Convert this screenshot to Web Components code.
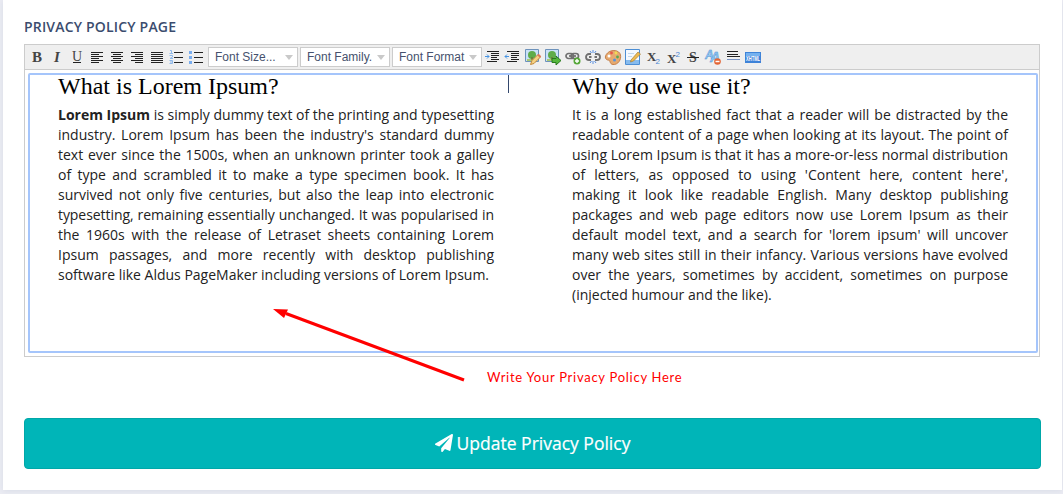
<!DOCTYPE html>
<html lang="en"><head><meta charset="utf-8"><title>Privacy Policy</title>
<style>html,body{margin:0;height:494px;overflow:hidden;background:#ebecf3}</style></head>
<body><policy-page></policy-page>
<script>
const def=(name,html)=>customElements.define(name,class extends HTMLElement{
  connectedCallback(){ if(this.shadowRoot)return; this.attachShadow({mode:'open'}).innerHTML=typeof html==='function'?html(this):html; }
});
const bars=(rows)=>rows.map(([y,a,b,c])=>`<path d="M${a} ${y+.5}H${b}" stroke="${c||'#222'}"/>`).join('');
const glyph=(t,x,y,s,extra='')=>`<text x="${x}" y="${y}" font-size="${s}" font-family="Liberation Serif,serif" fill="#444" ${extra}>${t}</text>`;
const photo=`<path d="M1.5 1.5h13v12h-13z" fill="#c9e1f8" stroke="#6d92bb"/><path d="M3 11h10v2H3z" fill="#a9c873"/><circle cx="8" cy="7" r="4" fill="#5fac4a"/><path d="M7.500 9h1v3h-1z" fill="#80572c"/>`;
const icons={
 bold:glyph('B',4,14,15,'font-weight="bold"'),
 italic:glyph('I',6,14,15,'font-weight="bold" font-style="italic"'),
 underline:glyph('U',4,12.5,14)+bars([[14,5,13]]),
 left:bars([[4,3,15],[6,3,11],[8,3,15],[10,3,11],[12,3,15],[14,3,11]]),
 center:bars([[4,3,15],[6,5,13],[8,3,15],[10,5,13],[12,3,15],[14,5,13]]),
 right:bars([[4,3,15],[6,7,15],[8,3,15],[10,7,15],[12,3,15],[14,7,15]]),
 justify:bars([[4,3,15],[6,3,15],[8,3,15],[10,3,15],[12,3,15],[14,3,15]]),
 ol:bars([[4,6,15],[9,6,15],[14,6,15]])+`<path d="M2 2.500h1.500v3M1.500 5.500H5M1.500 7.500h3v1.500l-2.500 1.500H5M1.500 12.500h3v3h-3M2 14h2.500" fill="none" stroke="#8fb9ea"/>`,
 ul:bars([[4,6,15],[9,6,15],[14,6,15]])+`<path d="M1 3h3v3H1zM1 8h3v3H1zM1 13h3v3H1z" fill="#78adf0"/>`,
 indent:bars([[3,3,15],[5,7,15],[7,7,15],[9,7,13],[11,7,15],[13,3,13]])+`<path d="M1 8.500h4M3 6.500l2 2-2 2" fill="none" stroke="#4593e3"/>`,
 outdent:bars([[3,3,15],[5,7,15],[7,7,15],[9,7,13],[11,7,15],[13,3,13]])+`<path d="M5 8.500H1M3 6.500l-2 2 2 2" fill="none" stroke="#4593e3"/>`,
 image:photo+`<path d="m8 12.500 6-6 2.500 2.500-6.500 6.500-3.500 1z" fill="#f6d183" stroke="#c18a3b"/><path d="m14 6.500 2.500 2.500" stroke="#dd765c" stroke-width="2"/>`,
 upload:photo+`<path d="M8 10.500h4V8l5 4.500-5 4.500v-2.500H8z" fill="#55b73c" stroke="#29791f"/>`,
 link:`<g fill="none" stroke="#707070" stroke-width="1.700"><rect x="2" y="5.500" width="7.500" height="5" rx="2.500"/><rect x="7" y="5.500" width="7.500" height="5" rx="2.500"/><path d="M5 8h7"/></g><circle cx="13" cy="13" r="3.500" fill="#55a738"/><path d="M11 13h4m-2-2v4" stroke="#fff" stroke-width="1.400"/>`,
 unlink:`<g fill="none" stroke="#707070" stroke-width="1.800"><path d="M7 6H5a3 3 0 0 0 0 6h2M11 6h2a3 3 0 0 1 0 6h-2M5 9h2.500m3 0H13"/></g><path d="m6 3 1.500 2M9 2v3m3-2-1.500 2M6 15l1.500-2M9 16v-3m3 2-1.500-2" stroke="#5a91e2"/>`,
 color:`<path d="M16.500 7c-1-5-9-6-13-2C-.5 9 2 12 4 12c3 0 1 4 5 4.500 5 .5 8.500-5 7.500-9.500z" fill="#e6aa70" stroke="#c5814b"/><circle cx="5" cy="8" r="1.500" fill="#fff"/><circle cx="7.500" cy="5" r="1.400" fill="#e7564c"/><circle cx="12" cy="5" r="1.400" fill="#f2db53"/><circle cx="13.500" cy="9" r="1.400" fill="#5aa950"/><circle cx="10.500" cy="12" r="1.500" fill="#5592dc"/>`,
 form:`<path d="M1.500 1.500h14v15h-14z" fill="#f4f9ff" stroke="#4c8ed4"/><path d="M2 12h13v4H2z" fill="#86bbee"/><path d="M4 5.500h6M4 8.500h4" stroke="#c0d7ee"/><path d="m7 12 7-8 2.500 2-7 7-3 1z" fill="#eebc51" stroke="#a57b37" stroke-width=".7"/>`,
 sub:glyph('X',3,13,13,'font-weight="bold"')+glyph('2',11.5,16,8,'style="fill:#4d86d4;font-family:Liberation Sans"'),
 sup:glyph('X',3,15,13,'font-weight="bold"')+glyph('2',11.5,9,8,'style="fill:#4d86d4;font-family:Liberation Sans"'),
 strike:glyph('S',5,14,14,'font-weight="bold"')+bars([[9,3,15]]),
 remove:`<g font-family="Liberation Sans" font-weight="bold" font-style="italic" fill="#8cc4f2" stroke="#4e8fcf" stroke-width=".4"><text x="1" y="11" font-size="12">A</text><text x="6" y="14" font-size="14">A</text></g><circle cx="13.500" cy="13.500" r="3.300" fill="#e36535"/><path d="M11.500 13.500h4" stroke="#fff" stroke-width="1.500"/>`,
 hr:bars([[3,3,14],[6,3,14],[8,3,16],[11,3,16,'#7893c5']]),
 xhtml:`<path d="M1 4h16v11H1z" fill="#3e83d8"/><path d="M2 5h14v3H2z" fill="#75b1ef"/><text x="2" y="13" font-family="Liberation Sans" font-size="7" font-weight="bold" fill="#fff" textLength="14" lengthAdjust="spacingAndGlyphs">XHTML</text>`
};
def('tool-icon',el=>`<style>:host{display:block;width:20px;height:20px}svg{display:block;margin:1px;overflow:visible}</style><svg width="18" height="18">${icons[el.getAttribute('kind')]}</svg>`);
def('font-select',`<style>:host{box-sizing:border-box;display:flex;align-items:center;justify-content:space-between;width:90px;height:20px;margin-right:2px;padding:0 4px 0 6px;border:1px solid #ccc;background:#fff;color:#46516d;font:12px/18px "Liberation Sans",sans-serif;white-space:nowrap}svg{flex:none}</style><slot></slot><svg width="8" height="5"><path d="M0 0h8L4 5z" fill="#c9c9c9"/></svg>`);
const row=list=>list.split(' ').map(k=>`<tool-icon kind="${k}"></tool-icon>`).join('');
def('editor-toolbar',`<style>:host{box-sizing:border-box;display:flex;align-items:center;width:1016px;height:26px;padding:0 2px;border:1px solid #ccc;background:#efefef}font-select:first-of-type{margin-left:1px}.tail{display:flex;margin-left:-1px}</style>${row('bold italic underline left center right justify ol ul')}<font-select>Font Size...</font-select><font-select>Font Family.</font-select><font-select>Font Format</font-select><div class="tail">${row('indent outdent image upload link unlink color form sub sup strike remove hr xhtml')}</div>`);
def('policy-column',`<style>:host{display:block;width:436px;color:#222;font:14px/20px "Open Sans",sans-serif}h2{margin:-1px 0 7px;font:24px/24px "Liberation Serif",serif;color:#000;white-space:nowrap}p{margin:0;text-align:justify}</style><h2><slot name="heading"></slot></h2><p><slot></slot></p>`);
def('policy-editor',`<style>:host{box-sizing:border-box;display:block;width:1016px;height:287px;padding:3px 1px 4px 3px;border:1px solid #ccc;border-top:0;background:#fff}.area{box-sizing:border-box;position:relative;display:grid;grid-template-columns:436px 436px;column-gap:78px;height:280px;width:1010px;padding:0 28px;border:2px solid #a5c5fb;border-radius:2px}.caret{position:absolute;left:478px;top:0;width:1px;height:18px;background:#34486d}.tight{letter-spacing:-.065px}</style>
<div class="area"><policy-column><span slot="heading">What is Lorem Ipsum?</span><b>Lorem Ipsum</b> is simply dummy text of the printing and typesetting industry. Lorem Ipsum has been the industry's standard dummy text ever since the 1500s, when an unknown printer took a galley of type and scrambled it to make a type specimen book. It has survived not only five centuries, but also the leap into electronic <span class="tight">typesetting, remaining essentially unchanged. It was popularised in</span> the 1960s with the release of Letraset sheets containing Lorem Ipsum passages, and more recently with desktop publishing software like Aldus PageMaker including versions of Lorem Ipsum.</policy-column>
<policy-column><span slot="heading">Why do we use it?</span>It is a long established fact that a reader will be distracted by the readable content of a page when looking at its layout. The point of using Lorem Ipsum is that it has a more-or-less normal distribution of letters, as opposed to using 'Content here, content here', making it look like readable English. Many desktop publishing packages and web page editors now use Lorem Ipsum as their default model text, and a search for 'lorem ipsum' will uncover many web sites still in their infancy. Various versions have evolved over the years, sometimes by accident, sometimes on purpose (injected humour and the like).</policy-column><i class="caret"></i></div>`);
def('callout-note',`<style>:host{position:absolute;left:272px;top:307px;display:block;color:#f00}svg{display:block}.t{position:absolute;left:215px;top:61px;white-space:nowrap;font:13px/18px Lato,sans-serif;letter-spacing:.73px}</style><svg width="194" height="76"><path d="M14 6.500 192 73" stroke="#f00" stroke-width="3"/><path d="M1 2 16 2.500 12 11z" fill="#f00"/></svg><span class="t"><slot></slot></span>`);
def('submit-button',`<style>:host{display:block}button{box-sizing:border-box;display:flex;align-items:center;justify-content:center;gap:4px;width:1017px;height:51px;margin:0;padding:0 0 2px;border:1px solid #00a7a8;border-radius:4px;background:#00b5b8;color:#fff;font:17.5px/24px "Open Sans",sans-serif;-webkit-text-stroke:.2px #fff}</style><button><svg width="18" height="18" viewBox="0 0 512 512"><path fill="#fff" d="M476 3.200 12.500 270.600c-18.100 10.400-15.800 35.600 2.200 43.200L121 358.400l287.300-253.200c5.500-4.900 13.300 2.600 8.600 8.300L176 407v80.500c0 23.600 28.500 32.900 42.500 15.800L282 426l124.600 52.200c14.200 6 30.400-2.900 33-18.200l72-432C515 7.800 493.300-6.800 476 3.200z"/></svg><span><slot></slot></span></button>`);
def('policy-page',`<style>:host{position:relative;box-sizing:border-box;display:block;width:1059px;height:490px;margin-left:3px;padding:18px 0 0 21px;background:#fff;box-shadow:0 1px 6px #d9dce7}h1{margin:0 0 8px;color:#3b4c6e;font:600 14px/18px "Open Sans",sans-serif;letter-spacing:.18px;white-space:nowrap}submit-button{margin-top:61px}callout-note{margin-left:-3px}</style><h1>PRIVACY POLICY PAGE</h1><editor-toolbar></editor-toolbar><policy-editor></policy-editor><callout-note>Write Your Privacy Policy Here</callout-note><submit-button>Update Privacy Policy</submit-button>`);
</script></body></html>
